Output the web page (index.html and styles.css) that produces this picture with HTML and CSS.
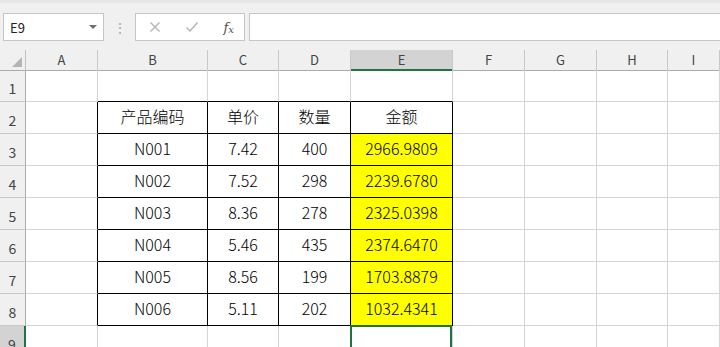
FILE: index.html
```html
<!DOCTYPE html>
<html>
<head>
    <title>Sheet1</title>
    <meta name="viewport" content="width=device-width, initial-scale=1.0">
    <link rel="stylesheet" href="styles.css">
</head>
<body>
    <div class="toolbar">
        <div class="name-box">
            <span>E9</span>
            <span class="drop"></span>
        </div>
        <div class="grip">⋮</div>
        <div class="fx-box">
            <svg class="ico" width="12" height="12" viewBox="0 0 12 12"><path d="M1.5 1.5 L10.5 10.5 M10.5 1.5 L1.5 10.5" stroke="#b3b3b3" stroke-width="1.4" fill="none"/></svg>
            <svg class="ico" width="14" height="12" viewBox="0 0 14 12"><path d="M1.5 6.5 L5 10 L12.5 1.5" stroke="#b3b3b3" stroke-width="1.4" fill="none"/></svg>
            <span class="fx">f<sub>x</sub></span>
        </div>
        <div class="formula"></div>
    </div>

    <div class="sheet">
        <div class="row head">
            <div class="corner"><span class="tri"></span></div>
            <div class="ch">A</div>
            <div class="ch">B</div>
            <div class="ch">C</div>
            <div class="ch">D</div>
            <div class="ch sel">E</div>
            <div class="ch">F</div>
            <div class="ch">G</div>
            <div class="ch">H</div>
            <div class="ch">I</div>
        </div>

        <div class="row">
            <div class="rh">1</div>
            <div class="c"></div>
            <div class="c tt"></div>
            <div class="c tt"></div>
            <div class="c tt"></div>
            <div class="c tt"></div>
            <div class="c"></div>
            <div class="c"></div>
            <div class="c"></div>
            <div class="c"></div>
        </div>

        <div class="row">
            <div class="rh">2</div>
            <div class="c tl"></div>
            <div class="c t">产品编码</div>
            <div class="c t">单价</div>
            <div class="c t">数量</div>
            <div class="c t">金额</div>
            <div class="c"></div>
            <div class="c"></div>
            <div class="c"></div>
            <div class="c"></div>
        </div>

        <div class="row">
            <div class="rh">3</div>
            <div class="c tl"></div>
            <div class="c t">N001</div>
            <div class="c t">7.42</div>
            <div class="c t">400</div>
            <div class="c t hl">2966.9809</div>
            <div class="c"></div>
            <div class="c"></div>
            <div class="c"></div>
            <div class="c"></div>
        </div>

        <div class="row">
            <div class="rh">4</div>
            <div class="c tl"></div>
            <div class="c t">N002</div>
            <div class="c t">7.52</div>
            <div class="c t">298</div>
            <div class="c t hl">2239.6780</div>
            <div class="c"></div>
            <div class="c"></div>
            <div class="c"></div>
            <div class="c"></div>
        </div>

        <div class="row">
            <div class="rh">5</div>
            <div class="c tl"></div>
            <div class="c t">N003</div>
            <div class="c t">8.36</div>
            <div class="c t">278</div>
            <div class="c t hl">2325.0398</div>
            <div class="c"></div>
            <div class="c"></div>
            <div class="c"></div>
            <div class="c"></div>
        </div>

        <div class="row">
            <div class="rh">6</div>
            <div class="c tl"></div>
            <div class="c t">N004</div>
            <div class="c t">5.46</div>
            <div class="c t">435</div>
            <div class="c t hl">2374.6470</div>
            <div class="c"></div>
            <div class="c"></div>
            <div class="c"></div>
            <div class="c"></div>
        </div>

        <div class="row">
            <div class="rh">7</div>
            <div class="c tl"></div>
            <div class="c t">N005</div>
            <div class="c t">8.56</div>
            <div class="c t">199</div>
            <div class="c t hl">1703.8879</div>
            <div class="c"></div>
            <div class="c"></div>
            <div class="c"></div>
            <div class="c"></div>
        </div>

        <div class="row">
            <div class="rh">8</div>
            <div class="c tl"></div>
            <div class="c t">N006</div>
            <div class="c t">5.11</div>
            <div class="c t">202</div>
            <div class="c t hl">1032.4341</div>
            <div class="c"></div>
            <div class="c"></div>
            <div class="c"></div>
            <div class="c"></div>
        </div>

        <div class="row">
            <div class="rh sel">9</div>
            <div class="c"></div>
            <div class="c"></div>
            <div class="c"></div>
            <div class="c"></div>
            <div class="c active"></div>
            <div class="c"></div>
            <div class="c"></div>
            <div class="c"></div>
            <div class="c"></div>
        </div>
    </div>
</body>
</html>
```

FILE: styles.css
```css
* { box-sizing: border-box; }
body { margin: 0; background-color: #fff; font-family: "Noto Sans CJK SC", "Noto Sans", sans-serif; color: #000; overflow: hidden; }

.toolbar { height: 50px; background-color: #f0f0f0; border-top: 3px solid #e6e6e6; padding: 10px 0 0 3px; display: flex; align-items: flex-start; }
.name-box { width: 101px; height: 28px; background: #fff; border: 1px solid #c6c6c6; display: flex; align-items: center; justify-content: space-between; padding: 0 6px 0 6px; font-size: 13px; color: #222; }
.drop { width: 0; height: 0; border-left: 4px solid transparent; border-right: 4px solid transparent; border-top: 4px solid #6d6d6d; }
.grip { width: 31px; text-align: center; color: #a8a8a8; font-size: 14px; line-height: 28px; }
.fx-box { width: 110px; height: 28px; background: #fff; border: 1px solid #c6c6c6; display: flex; align-items: center; justify-content: space-between; padding: 0 10px 0 13px; }
.fx { font-family: "DejaVu Serif", serif; font-style: italic; font-size: 13px; color: #505050; }
.fx sub { font-size: 10px; vertical-align: -1px; }
.formula { flex: 1; height: 28px; margin-left: 4px; background: #fff; border: 1px solid #c6c6c6; border-right: none; }

.row { display: grid; grid-template-columns: 26px 72px 110px 71px 72px 102px 72px 72px 71px 1fr; height: 32px; }
.row.head { height: 20px; }

.corner { background: #f0f0f0; border-right: 1px solid #c0c0c0; border-bottom: 1px solid #ababab; position: relative; }
.tri { position: absolute; right: 3px; bottom: 3px; width: 0; height: 0; border-left: 10px solid transparent; border-bottom: 10px solid #b4b4b4; }
.ch { background: #f0f0f0; border-right: 1px solid #c8c8c8; border-bottom: 1px solid #ababab; text-align: center; font-size: 13px; line-height: 19px; color: #444; }
.ch.sel { background: #d3d3d3; border-bottom: 2px solid #217346; }

.rh { background: #f0f0f0; border-right: 1px solid #ababab; border-bottom: 1px solid #c8c8c8; font-size: 14px; color: #444; display: flex; align-items: flex-end; justify-content: center; padding-bottom: 3px; }
.rh.sel { background: #d3d3d3; border-right: 2px solid #217346; }

.c { border-right: 1px solid #d4d4d4; border-bottom: 1px solid #d4d4d4; font-size: 16px; font-weight: 300; display: flex; align-items: center; justify-content: center; padding-bottom: 3px; }
.tt { border-bottom-color: #000; }
.tl { border-right-color: #000; }
.t { border-right-color: #000; border-bottom-color: #000; }
.hl { background-color: #ffff00; }
.active { position: relative; }
.active::after { content: ""; position: absolute; top: -1px; left: -1px; right: 0; bottom: -4px; border: 2px solid #217346; }
```
